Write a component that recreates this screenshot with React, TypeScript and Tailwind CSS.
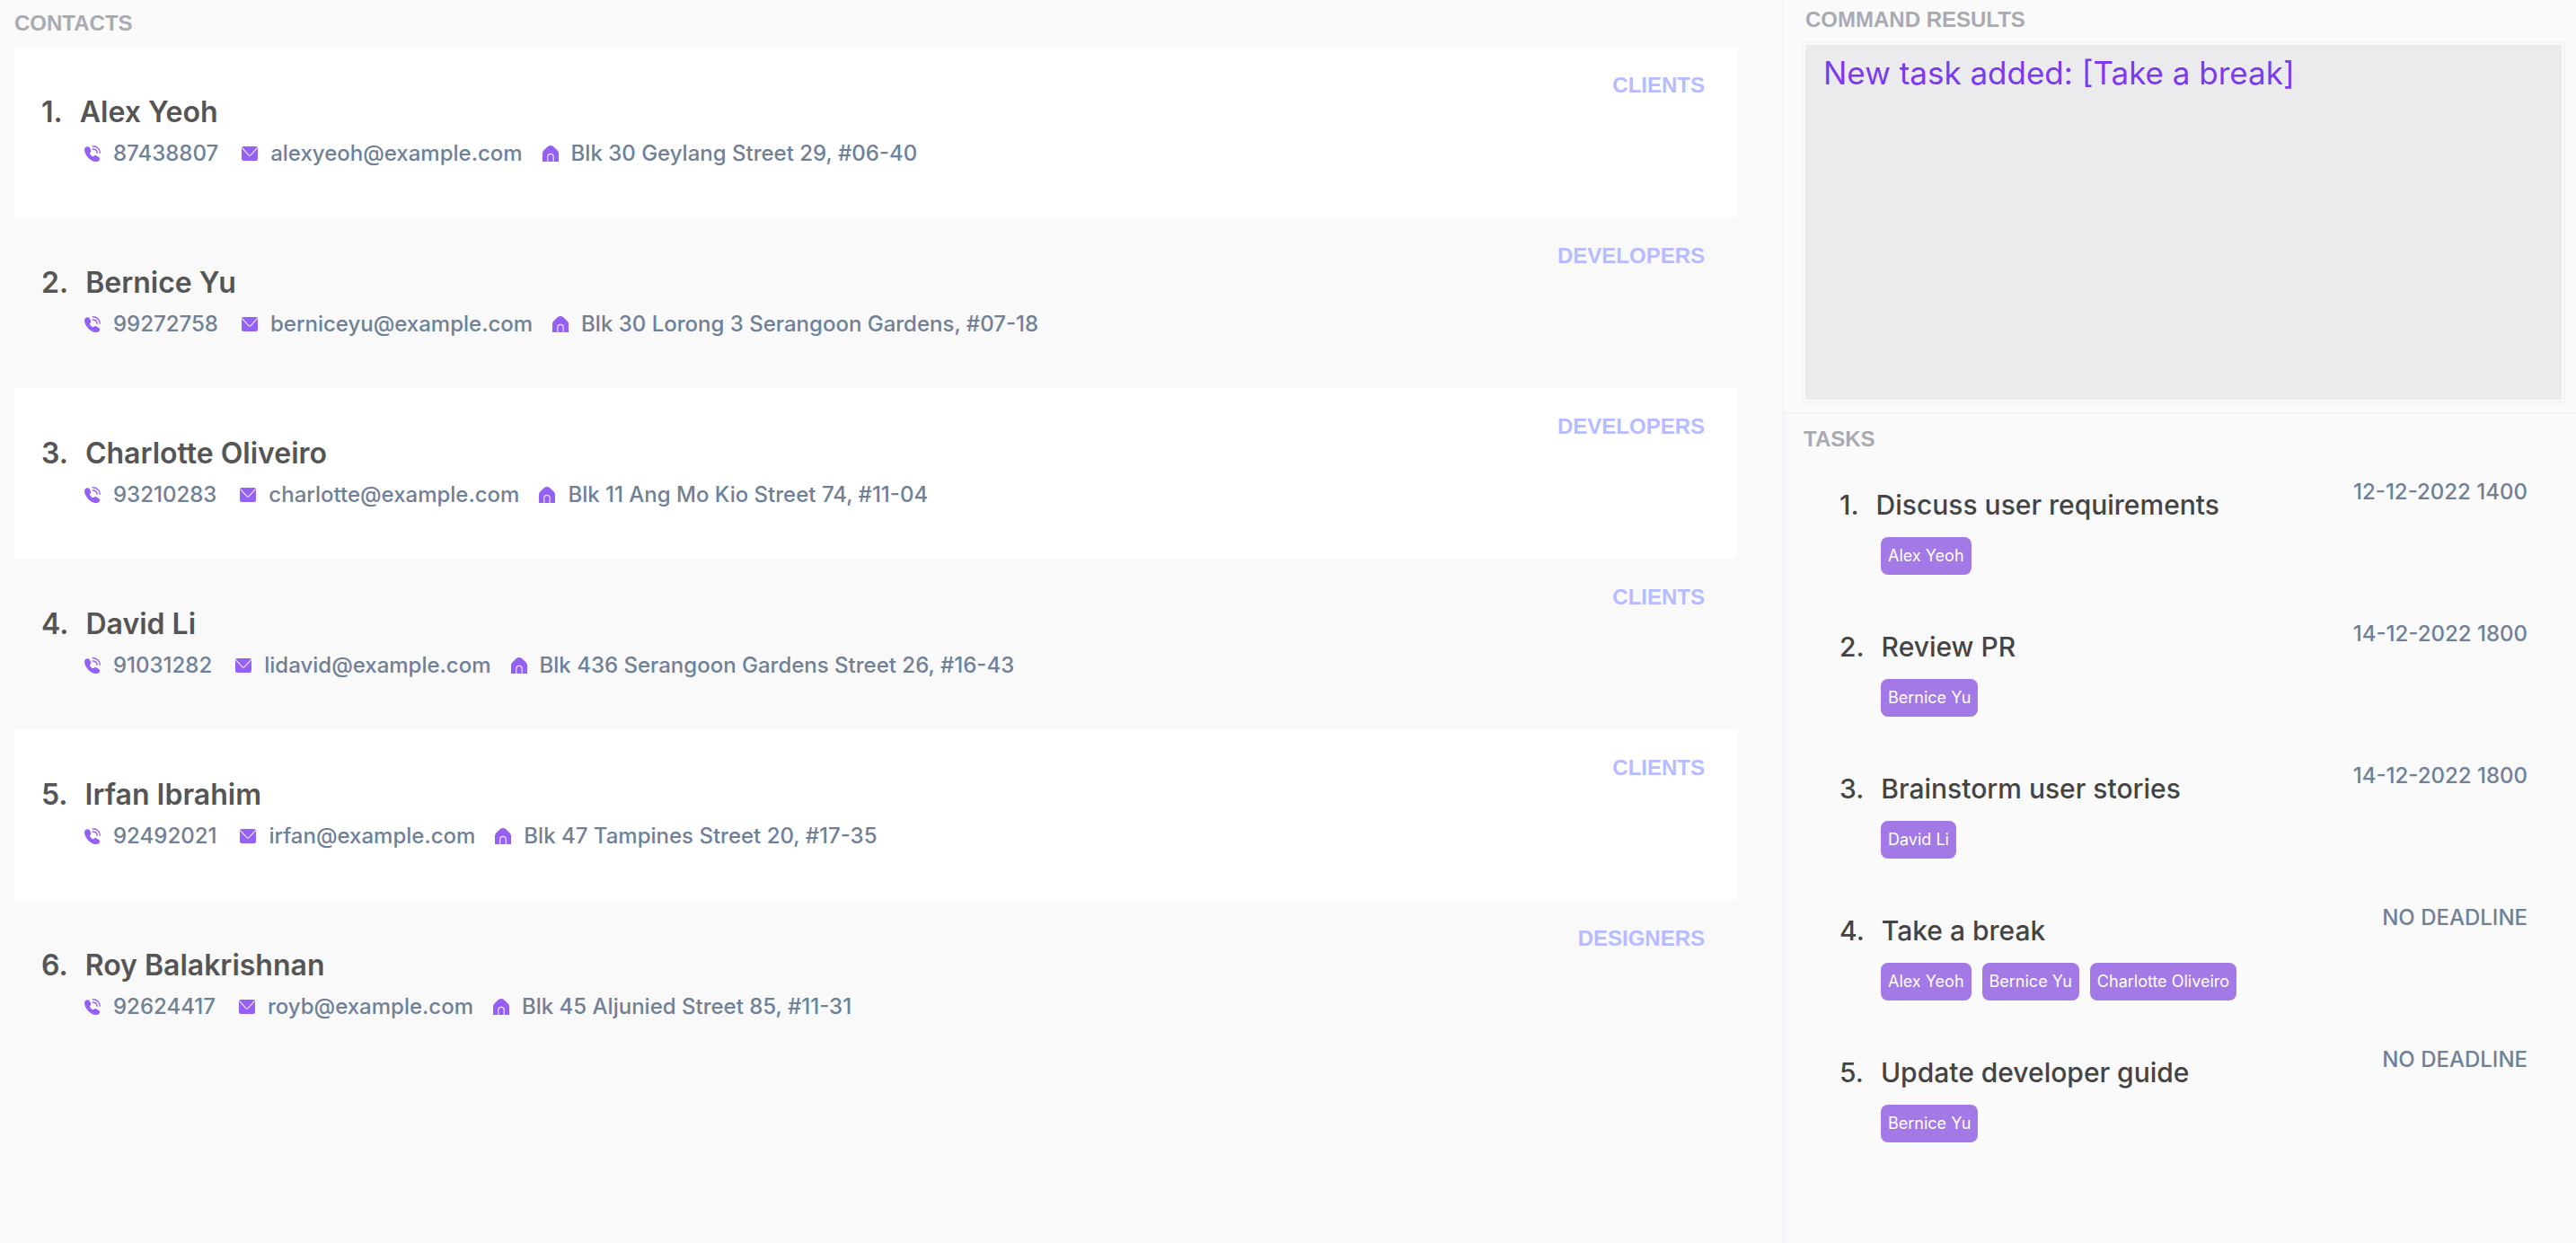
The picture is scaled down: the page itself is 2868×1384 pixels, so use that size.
import React from "react";

type Contact = {
  name: string;
  phone: string;
  email: string;
  address: string;
  group: string;
};

type Task = {
  title: string;
  deadline: string;
  assignees: string[];
};

const contacts: Contact[] = [
  { name: "Alex Yeoh", phone: "87438807", email: "alexyeoh@example.com", address: "Blk 30 Geylang Street 29, #06-40", group: "CLIENTS" },
  { name: "Bernice Yu", phone: "99272758", email: "berniceyu@example.com", address: "Blk 30 Lorong 3 Serangoon Gardens, #07-18", group: "DEVELOPERS" },
  { name: "Charlotte Oliveiro", phone: "93210283", email: "charlotte@example.com", address: "Blk 11 Ang Mo Kio Street 74, #11-04", group: "DEVELOPERS" },
  { name: "David Li", phone: "91031282", email: "lidavid@example.com", address: "Blk 436 Serangoon Gardens Street 26, #16-43", group: "CLIENTS" },
  { name: "Irfan Ibrahim", phone: "92492021", email: "irfan@example.com", address: "Blk 47 Tampines Street 20, #17-35", group: "CLIENTS" },
  { name: "Roy Balakrishnan", phone: "92624417", email: "royb@example.com", address: "Blk 45 Aljunied Street 85, #11-31", group: "DESIGNERS" },
];

const tasks: Task[] = [
  { title: "Discuss user requirements", deadline: "12-12-2022 1400", assignees: ["Alex Yeoh"] },
  { title: "Review PR", deadline: "14-12-2022 1800", assignees: ["Bernice Yu"] },
  { title: "Brainstorm user stories", deadline: "14-12-2022 1800", assignees: ["David Li"] },
  { title: "Take a break", deadline: "NO DEADLINE", assignees: ["Alex Yeoh", "Bernice Yu", "Charlotte Oliveiro"] },
  { title: "Update developer guide", deadline: "NO DEADLINE", assignees: ["Bernice Yu"] },
];

const headingClass =
  "font-['Liberation_Sans',Arial,sans-serif] text-2xl leading-8 font-bold text-[#aaaab2]";

function PhoneIcon() {
  return (
    <svg viewBox="0 0 18 18" className="size-[18px] shrink-0 text-[#9560f4]" aria-hidden="true">
      <path
        fill="currentColor"
        d="M1.3 2C2.8 .7 4.8 1 5.8 2.6L7 4.8C7.5 5.9 7.2 7 6.4 7.7C5.8 8.3 5.8 8.9 6.6 9.9C7.6 11.1 8.5 11.9 9.3 12.1C10 12.3 10.4 12 10.9 11.6C11.6 11 12.6 11 13.4 11.4L15.8 12.8C17.3 13.7 17.6 15.2 16.6 16.5C15 18.4 12.5 18.5 9.8 17.4C5.5 15.6 1.9 11.7 .5 7.4C-.2 5.2 0 3.2 1.3 2Z"
      />
      <path
        fill="none"
        stroke="currentColor"
        strokeWidth="1.4"
        strokeLinecap="round"
        d="M9.3 .8C13.8 .9 17.1 3.9 17.3 8.1M9.3 4C12 4.1 13.9 5.7 14.1 8.2"
      />
    </svg>
  );
}

function MailIcon() {
  return (
    <svg viewBox="0 0 18 16" className="h-4 w-[18px] shrink-0" aria-hidden="true">
      <rect width="18" height="16" rx="2.2" fill="#9560f4" />
      <path d="M.6 1.6L7.8 9.6Q9 10.8 10.2 9.6L17.4 1.6" fill="none" stroke="#f1eafe" strokeWidth="1.1" />
    </svg>
  );
}

function HomeIcon() {
  return (
    <svg viewBox="0 0 18 18" className="size-[18px] shrink-0" aria-hidden="true">
      <path d="M0 18V8.6Q0 7 1.1 5.7L6 1Q9 -1 12 1L16.9 5.7Q18 7 18 8.6V18Z" fill="#9560f4" />
      <path d="M5.8 18V12.6A3.2 3.2 0 0 1 12.2 12.6V18" fill="none" stroke="#f1eafe" strokeWidth="1.1" />
    </svg>
  );
}

function ContactRow({ contact, index }: { contact: Contact; index: number }) {
  return (
    <li className="flex items-start justify-between bg-white pr-9 pl-[30px] even:bg-[#f9f9f9]">
      <div className="pt-[53px] pb-[55px]">
        <h3 className="flex gap-[19px] text-[32px] leading-10 font-semibold text-[#555555]">
          <span>{index}.</span>
          <span>{contact.name}</span>
        </h3>
        <div className="mt-2.5 ml-12 flex items-center text-2xl leading-8 font-[450] text-[#6f8097]">
          <span className="mr-[26px] flex items-center gap-3.5">
            <PhoneIcon />
            {contact.phone}
          </span>
          <span className="mr-[22px] flex items-center gap-3.5">
            <MailIcon />
            {contact.email}
          </span>
          <span className="flex items-center gap-3.5">
            <HomeIcon />
            {contact.address}
          </span>
        </div>
      </div>
      <p className="pt-[27px] font-['Liberation_Sans',Arial,sans-serif] text-2xl leading-8 font-bold text-[#b7bbff]">
        {contact.group}
      </p>
    </li>
  );
}

function TaskRow({ task, index }: { task: Task; index: number }) {
  return (
    <li className="flex items-start justify-between pb-12">
      <div className="pt-2.5">
        <h3 className="flex gap-[19px] text-3xl leading-10 font-[450] text-[#444444]">
          <span>{index}.</span>
          <span>{task.title}</span>
        </h3>
        <ul className="mt-4 ml-[46px] flex gap-3">
          {task.assignees.map((person) => (
            <li key={person} className="rounded-lg bg-[#a379e6] px-2 text-lg leading-[42px] text-white">
              {person}
            </li>
          ))}
        </ul>
      </div>
      <p className="text-2xl leading-8 font-[450] text-[#6f8097]">{task.deadline}</p>
    </li>
  );
}

export default function App() {
  return (
    <main className="grid min-h-screen grid-cols-[496fr_221fr] bg-[#fafafa] font-['Inter',sans-serif]">
      <section className="pt-2.5 pr-[50px] pl-4">
        <h2 className={headingClass}>CONTACTS</h2>
        <ol className="mt-2.5">
          {contacts.map((contact, i) => (
            <ContactRow key={contact.name} contact={contact} index={i + 1} />
          ))}
        </ol>
      </section>

      <div className="flex flex-col">
        <section className="border-l-2 border-[#f4f4f6] pt-1.5 pr-3 pb-2.5 pl-5">
          <label htmlFor="command-results" className={`block pl-1 ${headingClass}`}>
            COMMAND RESULTS
          </label>
          <div className="mt-2 border-2 border-[#f4f4f6] p-0.5">
            <textarea
              id="command-results"
              readOnly
              value="New task added: [Take a break]"
              className="block h-[395px] w-full resize-none bg-[#ebebed] px-5 py-2 text-[35px] leading-[46px] text-[#7c3aed] outline-none"
            />
          </div>
        </section>

        <section className="grow border-t-2 border-l-4 border-t-[#f4f4f6] border-l-[#f3f4f8] pt-3">
          <h2 className={`pl-5 ${headingClass}`}>TASKS</h2>
          <ol className="mt-[27px] flex flex-col gap-0.5 pr-[54px] pl-[60px]">
            {tasks.map((task, i) => (
              <TaskRow key={task.title} task={task} index={i + 1} />
            ))}
          </ol>
        </section>
      </div>
    </main>
  );
}
